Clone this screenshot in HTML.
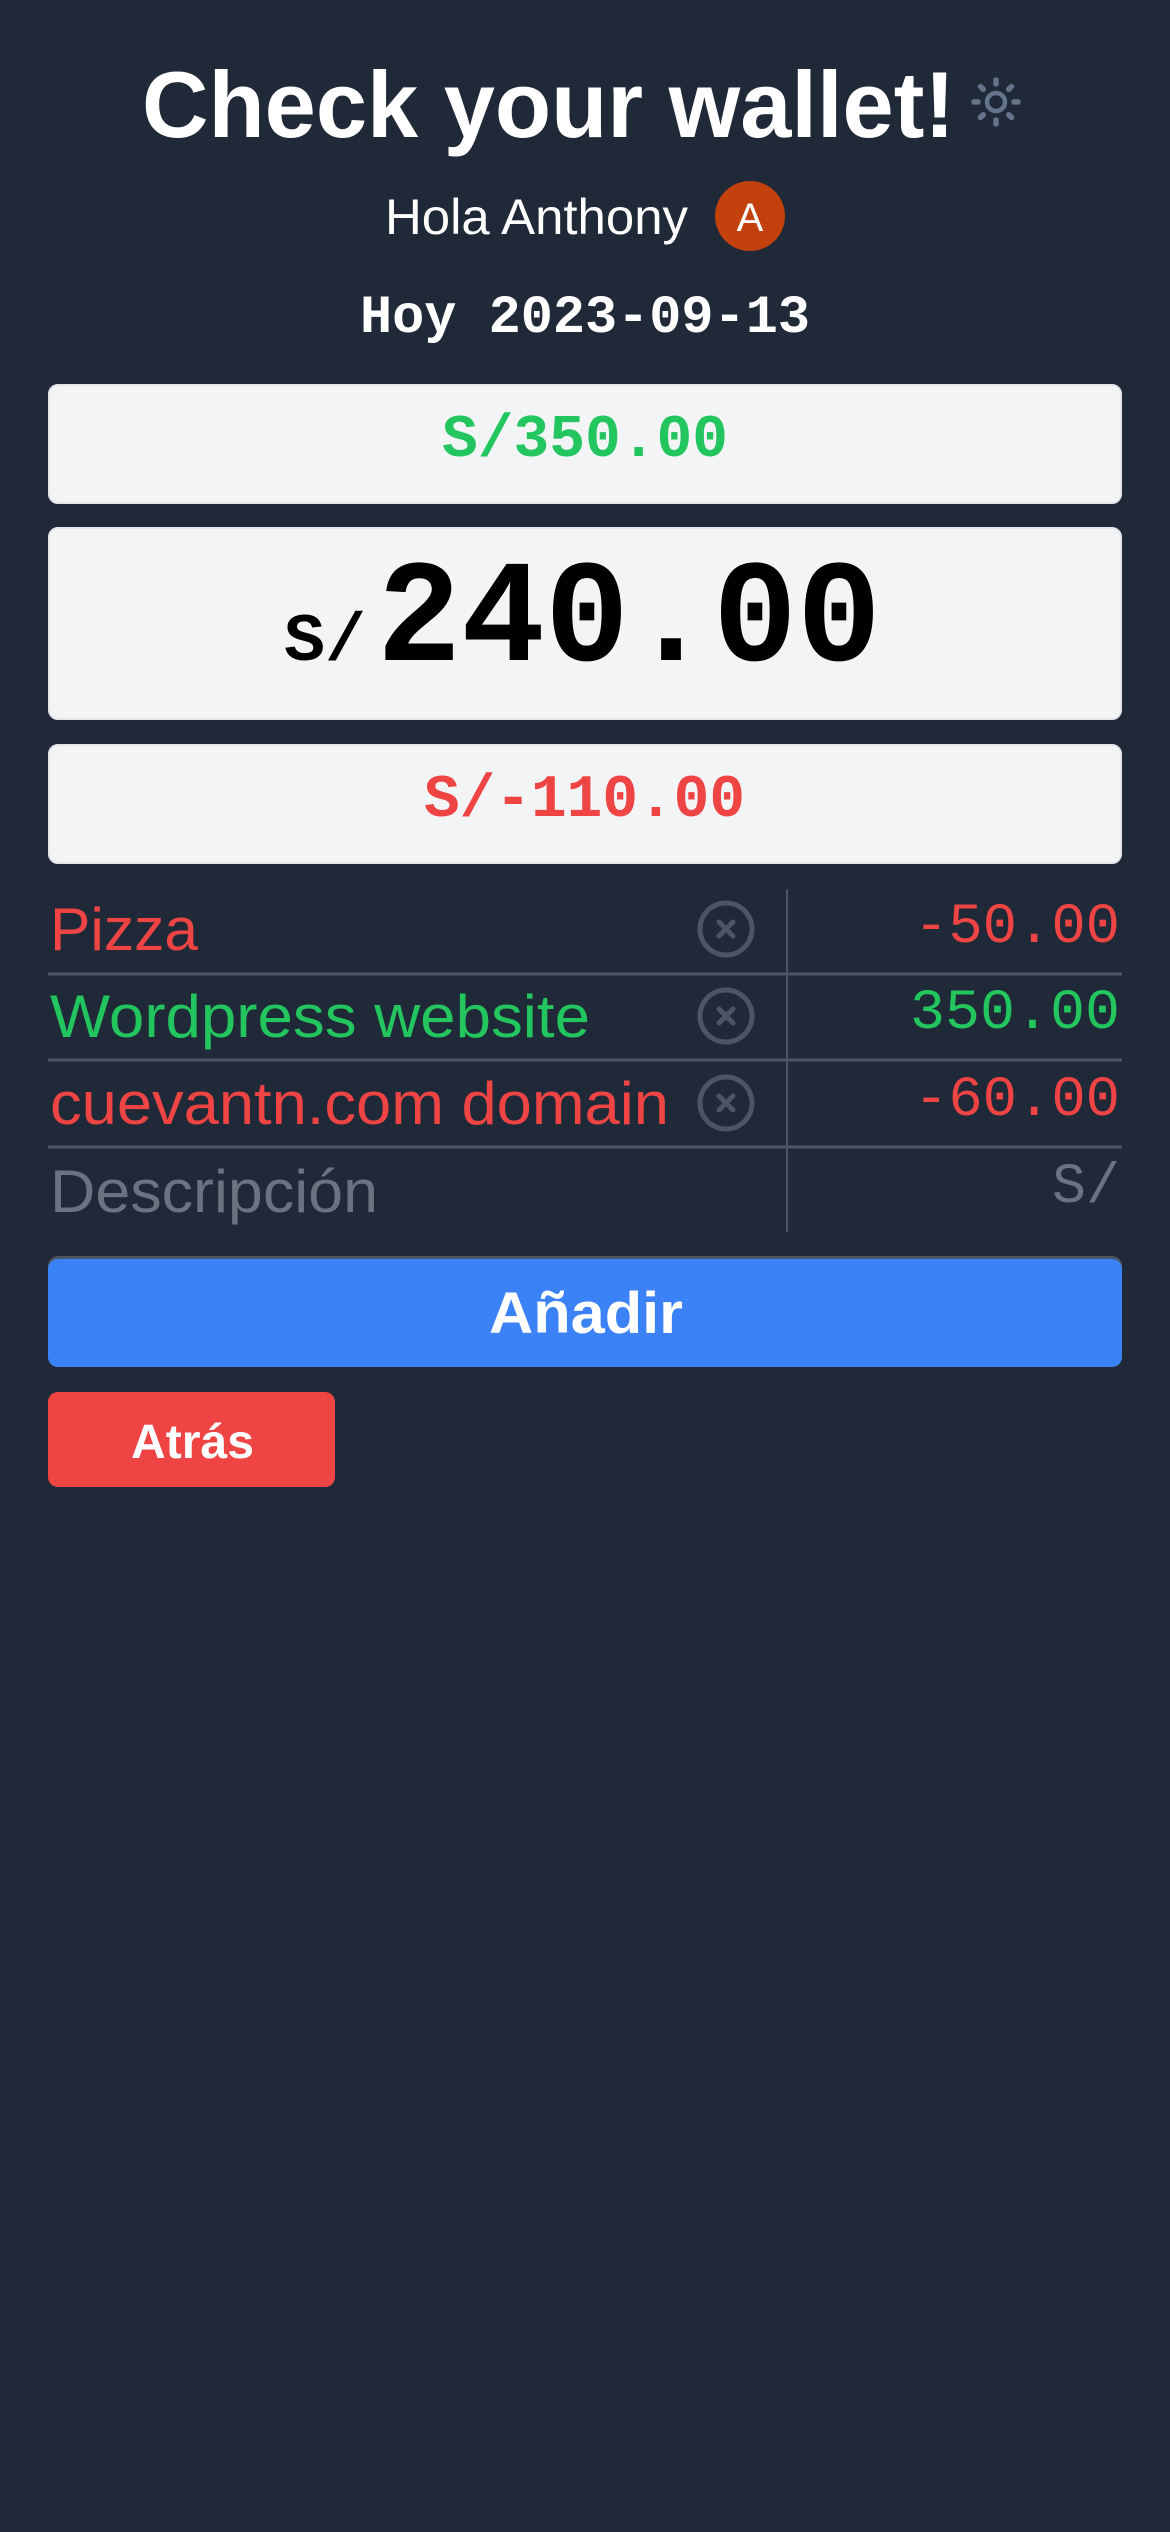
<!DOCTYPE html>
<html><head><meta charset="utf-8"><style>
html,body{margin:0;padding:0;background:#1f2937;}
svg{display:block}
.s{font-family:"Liberation Sans",sans-serif}
.m{font-family:"Liberation Mono",monospace}
</style></head><body>
<svg width="1170" height="2532" viewBox="0 0 1170 2532" xmlns="http://www.w3.org/2000/svg">
<rect width="1170" height="2532" fill="#1f2937"/>
<text class="s" x="142" y="137" font-size="94" font-weight="700" fill="#fff" textLength="813" lengthAdjust="spacingAndGlyphs">Check your wallet!</text>
<g stroke="#64748b" fill="none" stroke-linecap="round">
<circle cx="996" cy="102" r="9" stroke-width="4.5"/>
<g stroke-width="5.5">
<line x1="996" y1="80" x2="996" y2="84"/><line x1="996" y1="120" x2="996" y2="124"/>
<line x1="974" y1="102" x2="978" y2="102"/><line x1="1014" y1="102" x2="1018" y2="102"/>
<line x1="980.5" y1="86.5" x2="983.3" y2="89.3"/><line x1="1008.7" y1="114.7" x2="1011.5" y2="117.5"/>
<line x1="1011.5" y1="86.5" x2="1008.7" y2="89.3"/><line x1="983.3" y1="114.7" x2="980.5" y2="117.5"/>
</g></g>
<text class="s" x="385" y="234" font-size="50" fill="#fff" textLength="303" lengthAdjust="spacingAndGlyphs">Hola Anthony</text>
<circle cx="750" cy="216" r="35" fill="#c2410c"/>
<text class="s" x="750" y="231" font-size="40" fill="#fff" text-anchor="middle">A</text>
<text class="m" x="360" y="332" font-size="54" font-weight="700" fill="#fff" textLength="450" lengthAdjust="spacingAndGlyphs">Hoy 2023-09-13</text>

<rect x="49" y="385" width="1072" height="118" rx="9" fill="#f3f4f6" stroke="#e5e7eb" stroke-width="2"/>
<text class="m" x="442" y="456" font-size="60" font-weight="700" fill="#22c55e" textLength="286" lengthAdjust="spacingAndGlyphs">S/350.00</text>
<rect x="49" y="528" width="1072" height="191" rx="9" fill="#f3f4f6" stroke="#e5e7eb" stroke-width="2"/>
<text class="m" x="284" y="660" font-size="68" font-weight="700" fill="#000" textLength="82" lengthAdjust="spacingAndGlyphs">S/</text>
<text class="m" x="377" y="660" font-size="146" font-weight="700" fill="#000" textLength="504" lengthAdjust="spacingAndGlyphs">240.00</text>
<rect x="49" y="745" width="1072" height="118" rx="9" fill="#f3f4f6" stroke="#e5e7eb" stroke-width="2"/>
<text class="m" x="424" y="816" font-size="60" font-weight="700" fill="#ef4444" textLength="321" lengthAdjust="spacingAndGlyphs">S/-110.00</text>

<g stroke="#4b5563">
<line x1="48" y1="974" x2="1122" y2="974" stroke-width="3"/>
<line x1="48" y1="1060" x2="1122" y2="1060" stroke-width="3"/>
<line x1="48" y1="1147" x2="1122" y2="1147" stroke-width="3"/>
<line x1="787" y1="889" x2="787" y2="1232" stroke-width="2"/>
</g>
<text class="s" x="50" y="950" font-size="60" fill="#ef4444" textLength="148" lengthAdjust="spacingAndGlyphs">Pizza</text>
<text class="s" x="50" y="1037" font-size="60" fill="#22c55e" textLength="540" lengthAdjust="spacingAndGlyphs">Wordpress website</text>
<text class="s" x="50" y="1124" font-size="60" fill="#ef4444" textLength="619" lengthAdjust="spacingAndGlyphs">cuevantn.com domain</text>
<text class="s" x="50" y="1212" font-size="60" fill="#6b7280" textLength="328" lengthAdjust="spacingAndGlyphs">Descripción</text>

<g stroke="#4b5563" fill="none" stroke-linecap="round">
<circle cx="726" cy="929" r="26" stroke-width="5"/>
<path d="M719 922L733 936M733 922L719 936" stroke-width="5"/>
<circle cx="726" cy="1016" r="26" stroke-width="5"/>
<path d="M719 1009L733 1023M733 1009L719 1023" stroke-width="5"/>
<circle cx="726" cy="1103" r="26" stroke-width="5"/>
<path d="M719 1096L733 1110M733 1096L719 1110" stroke-width="5"/>
</g>

<text class="m" x="1120" y="942" font-size="57" fill="#ef4444" text-anchor="end" textLength="206" lengthAdjust="spacingAndGlyphs">-50.00</text>
<text class="m" x="1120" y="1028" font-size="57" fill="#22c55e" text-anchor="end" textLength="210" lengthAdjust="spacingAndGlyphs">350.00</text>
<text class="m" x="1120" y="1115" font-size="57" fill="#ef4444" text-anchor="end" textLength="206" lengthAdjust="spacingAndGlyphs">-60.00</text>
<text class="m" x="1120" y="1202" font-size="57" fill="#6b7280" text-anchor="end" textLength="68" lengthAdjust="spacingAndGlyphs">S/</text>

<rect x="48" y="1256" width="1074" height="111" rx="10" fill="#4b5563"/>
<rect x="48" y="1259" width="1074" height="108" rx="10" fill="#3b82f6"/>
<text class="s" x="489" y="1333" font-size="58" font-weight="700" fill="#fff" textLength="194" lengthAdjust="spacingAndGlyphs">Añadir</text>
<rect x="48" y="1392" width="287" height="95" rx="10" fill="#ef4444"/>
<text class="s" x="131" y="1458" font-size="48" font-weight="700" fill="#fff" textLength="123" lengthAdjust="spacingAndGlyphs">Atrás</text>
</svg>
</body></html>
